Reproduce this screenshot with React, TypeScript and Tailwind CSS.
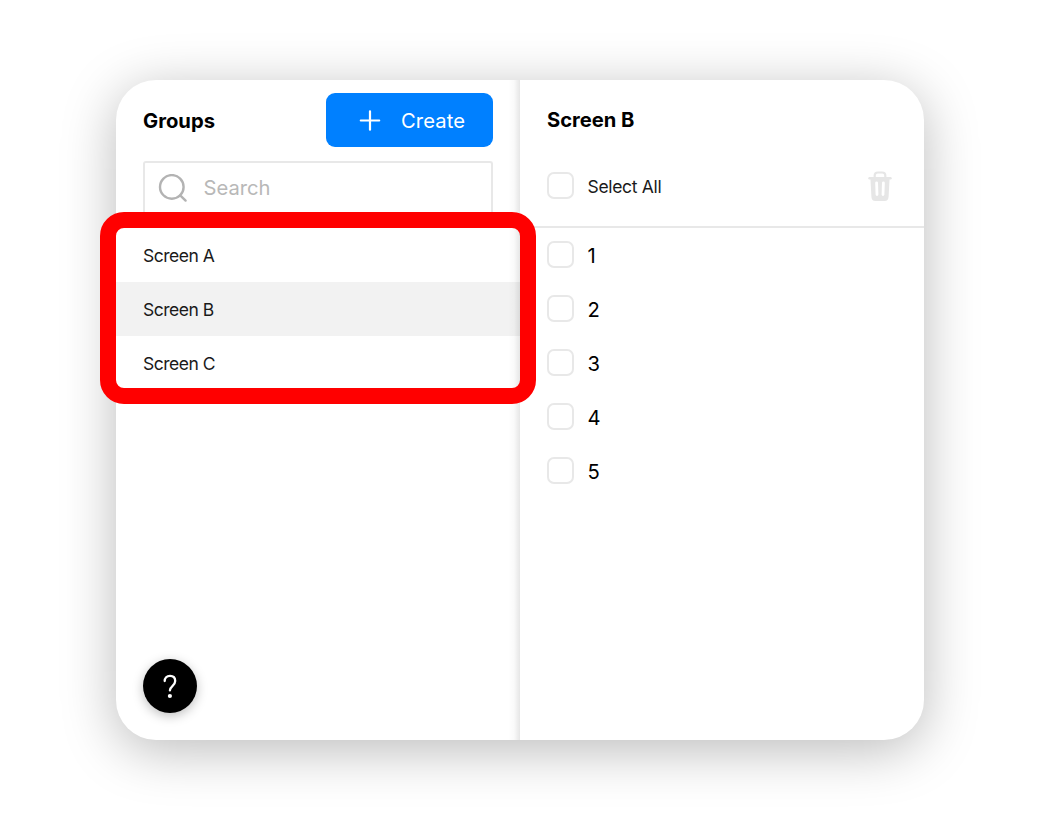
import React from "react";

const screens = ["Screen A", "Screen B", "Screen C"];
const items = ["1", "2", "3", "4", "5"];

function Checkbox({ label }: { label: string }) {
  return (
    <span
      role="checkbox"
      aria-checked={false}
      aria-label={label}
      className="block size-[27px] shrink-0 rounded-[7px] border-2 border-[#e8e8e8] bg-white"
    />
  );
}

function SearchIcon() {
  return (
    <svg width="30" height="30" viewBox="0 0 30 30" fill="none" stroke="#b3b3b3" strokeWidth="2.4" strokeLinecap="round">
      <circle cx="13.8" cy="12.9" r="11.8" />
      <path d="M22.2 21.3L27.6 26.6" />
    </svg>
  );
}

function PlusIcon() {
  return (
    <svg width="22" height="22" viewBox="0 0 22 22" fill="none" stroke="white" strokeWidth="2.2" strokeLinecap="round">
      <path d="M11 2.3V20.7M1.8 11.5H20.2" />
    </svg>
  );
}

function TrashIcon() {
  return (
    <svg width="24" height="30" viewBox="0 0 24 30" fill="none">
      <path d="M6.7 6.5V4.4Q6.7 1.5 9.8 1.5H14.2Q17.3 1.5 17.3 4.4V6.5" stroke="#e6e6e6" strokeWidth="2.2" />
      <path d="M1.5 7.2H22.5" stroke="#e6e6e6" strokeWidth="2.4" strokeLinecap="round" />
      <path
        fillRule="evenodd"
        fill="#e6e6e6"
        d="M2.4 7H21.6L20.6 25.8Q20.4 30 16.6 30H7.4Q3.6 30 3.4 25.8ZM8.6 10.4Q7.2 10.4 7.2 11.8L7.6 23.6Q7.7 25 9 25Q10.4 25 10.4 23.6L10 11.8Q10 10.4 8.6 10.4ZM15.4 10.4Q14 10.4 14 11.8L13.6 23.6Q13.6 25 15 25Q16.3 25 16.4 23.6L16.8 11.8Q16.8 10.4 15.4 10.4Z"
      />
    </svg>
  );
}

function HelpIcon() {
  return (
    <svg width="16" height="26" viewBox="0 0 16 26" fill="none" stroke="white" strokeWidth="2.3" strokeLinecap="round" strokeLinejoin="round">
      <path d="M2.7 8.1C2.7 4.9 4.8 2.8 8 2.8C11.2 2.8 13.2 4.9 13.2 7.9C13.2 10.2 12.2 11.6 10.2 13.3C8.5 14.8 7.9 15.6 7.9 17.4" />
      <circle cx="7.9" cy="23" r="2.1" fill="white" stroke="none" />
    </svg>
  );
}

export default function App() {
  return (
    <div className="flex h-[820px] w-[1040px] items-center justify-center bg-white font-['Inter',sans-serif] text-black">
      <main className="relative flex h-[660px] w-[808px] rounded-[40px] bg-white shadow-[0_10px_54px_rgba(0,0,0,0.27)]">
        <section className="flex w-[404px] flex-col rounded-l-[40px]">
          <header className="mt-[13.4px] flex h-[54px] items-center justify-between pr-[27px] pl-[27px]">
            <h1 className="pt-px text-[20.2px] leading-6 font-bold tracking-[0.02px]">Groups</h1>
            <button className="flex h-[54px] w-[167px] items-center rounded-[9px] bg-[#0080ff] pl-[33px] text-[20.2px] text-white">
              <PlusIcon />
              <span className="ml-[20px] pt-[2px] tracking-[0.1px]">Create</span>
            </button>
          </header>
          <div className="mx-[27px] mt-[13.5px] flex h-[54px] items-center rounded-t-[3px] border-2 border-b-0 border-[#e8e8e8] pl-[13px]">
            <SearchIcon />
            <span className="ml-[15.5px] pb-[2px] text-[20.2px] text-[#b8b8b8]">Search</span>
          </div>
          <ul className="mt-[13.1px]">
            {screens.map((name) => (
              <li
                key={name}
                className={`flex h-[54px] items-center pt-[2px] pl-[27px] text-[17.5px] tracking-[-0.48px] text-[#1a1a1a] ${name === "Screen B" ? "bg-[#f2f2f2]" : ""}`}
              >
                {name}
              </li>
            ))}
          </ul>
          <button
            aria-label="Help"
            className="mt-auto mb-[27px] ml-[27px] flex size-[54px] items-center justify-center rounded-full bg-black shadow-[0_3px_11px_rgba(0,0,0,0.25)]"
          >
            <HelpIcon />
          </button>
        </section>
        <div className="absolute top-0 left-[392px] h-full w-3 bg-gradient-to-r from-black/0 via-black/[0.02] to-black/10" />
        <section className="flex w-[404px] flex-col">
          <h2 className="mt-[28px] ml-[27px] text-[20.2px] leading-6 font-bold tracking-[-0.03px]">Screen B</h2>
          <div className="mt-[13.5px] flex h-[82.5px] items-center border-b-2 border-[#e8e8e8] pr-[32px] pl-[27px]">
            <Checkbox label="Select all" />
            <span className="ml-[13.5px] pt-[3px] text-[17.5px] tracking-[-0.32px] text-[#1a1a1a]">Select All</span>
            <span className="ml-auto">
              <TrashIcon />
            </span>
          </div>
          <ul className="-mt-[0.6px]">
            {items.map((item) => (
              <li key={item} className="flex h-[54px] items-center pl-[27px] text-[20.2px]">
                <Checkbox label={item} />
                <span className="ml-[13.5px] pt-[3.4px]">{item}</span>
              </li>
            ))}
          </ul>
        </section>
        <div className="pointer-events-none absolute top-[132px] left-[-16px] h-[192px] w-[436px] rounded-[24px] border-[16px] border-[#ff0000]" />
      </main>
    </div>
  );
}
